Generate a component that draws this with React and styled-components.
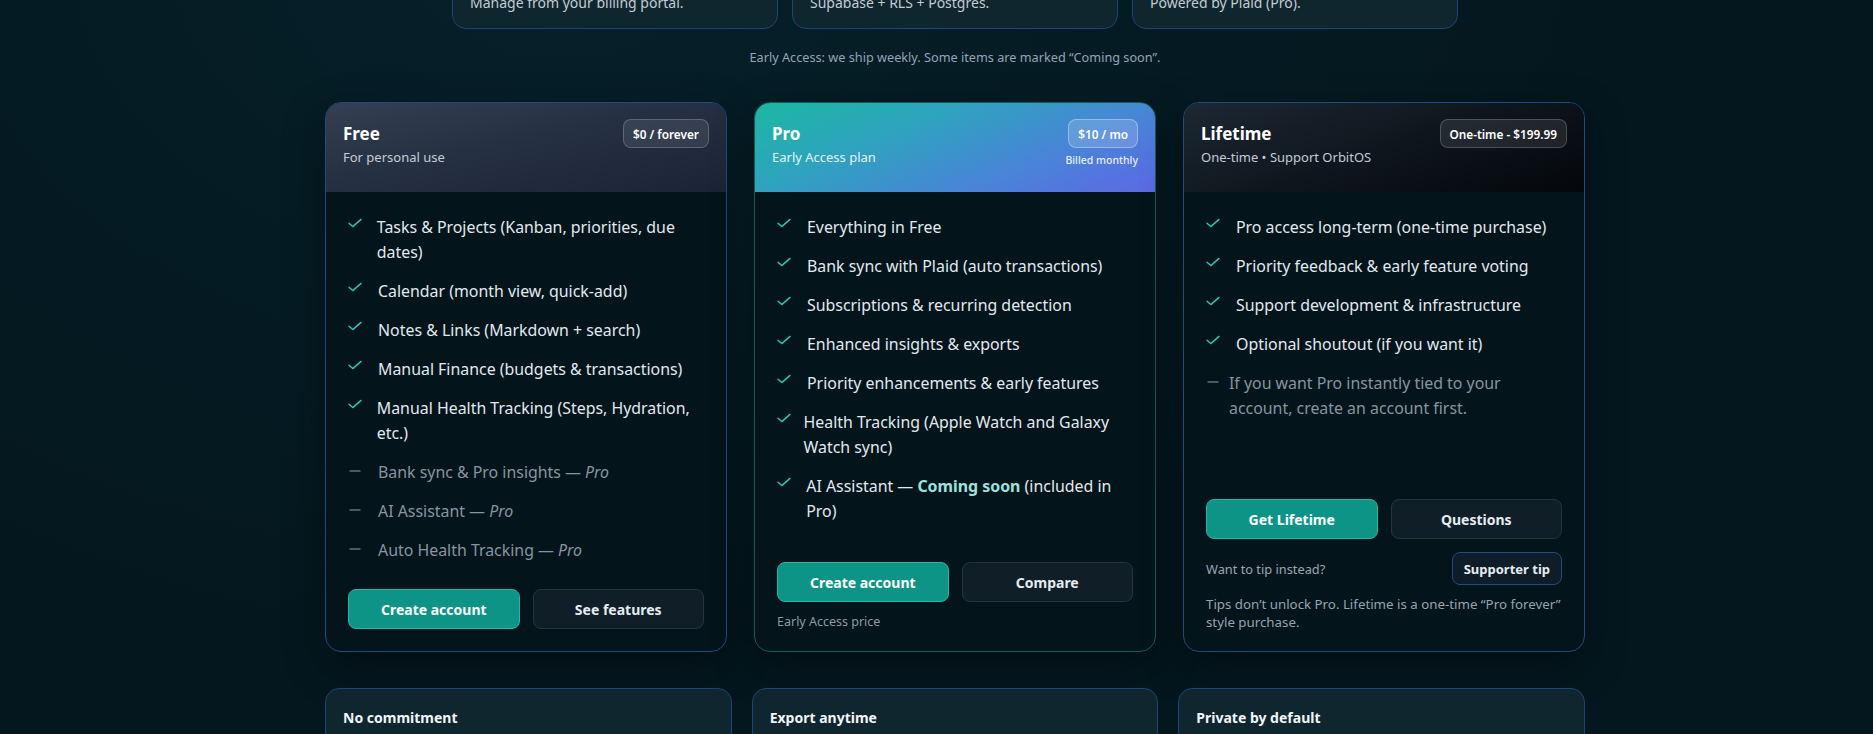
import React from 'react';
import styled, { createGlobalStyle, css } from 'styled-components';

const GlobalStyle = createGlobalStyle`
  html, body {
    margin: 0;
    padding: 0;
    overflow: hidden;
    background: #04171e;
  }
  body {
    font-family: "Noto Sans", "Open Sans", sans-serif;
    color: #e2e8f0;
  }
  * { box-sizing: border-box; }
`;

const Page = styled.main`
  display: flex;
  flex-direction: column;
  align-items: center;
  padding-left: 37px;
  margin-top: -50px;
  min-height: 900px;
  background: radial-gradient(ellipse at 30% 0%, #062029 0%, #04171e 55%);
`;

const InfoRow = styled.section`
  display: grid;
  grid-template-columns: repeat(3, 1fr);
  gap: ${p => p.$gap || 14}px;
  width: ${p => p.$width || 1006}px;
  margin-top: ${p => p.$top || 0}px;
`;

const InfoCard = styled.div`
  background: #10262e;
  border: 1px solid #1d4476;
  border-radius: 14px;
  padding: ${p => p.$pad || '16px 17px 15px'};
`;

const InfoTitle = styled.div`
  font-size: 14px;
  font-weight: 700;
  line-height: 20px;
  color: #f1f5f9;
`;

const InfoText = styled.div`
  margin-top: 6px;
  font-size: 14px;
  line-height: 20px;
  color: #c3ccd5;
`;

const Note = styled.p`
  margin: 20px 0 0;
  font-size: 12.7px;
  line-height: 16px;
  color: #94a3b8;
`;

const PlanGrid = styled.section`
  display: grid;
  grid-template-columns: repeat(3, 402px);
  gap: 27px;
  margin-top: 37px;
`;

const Card = styled.article`
  display: flex;
  flex-direction: column;
  border: 1px solid ${p => (p.$tone === 'pro' ? '#135b57' : '#1c4c80')};
  border-radius: 16px;
  overflow: hidden;
  background: #03141a;
  box-shadow: 0 14px 40px rgba(0, 0, 0, 0.35);
`;

const headerBg = {
  free: 'linear-gradient(168deg, #343f52 0%, #263043 45%, #1b2435 100%)',
  pro: 'linear-gradient(158deg, #1cb8a2 0%, #2fa2bf 35%, #4a83d8 70%, #5d68e6 100%)',
  lifetime: 'linear-gradient(160deg, #1d2833 0%, #0d141b 55%, #04070b 100%)',
};

const Header = styled.header`
  display: flex;
  justify-content: space-between;
  align-items: flex-start;
  height: 89px;
  padding: 16px 17px 0;
  background: ${p => headerBg[p.$tone]};
`;

const TitleBlock = styled.div`
  padding-top: 4px;
`;

const PlanName = styled.h3`
  margin: 0;
  font-size: 17px;
  font-weight: 700;
  line-height: 22px;
  color: #fff;
`;

const PlanSub = styled.div`
  margin-top: 3px;
  font-size: 13px;
  line-height: 18px;
  color: ${p => (p.$tone === 'pro' ? '#e3f4f6' : '#c4ccd6')};
`;

const PriceBlock = styled.div`
  display: flex;
  flex-direction: column;
  align-items: flex-end;
`;

const Badge = styled.span`
  display: inline-flex;
  align-items: center;
  height: 29px;
  padding: 0 9px;
  border-radius: 8px;
  font-size: 11.8px;
  font-weight: 600;
  color: #fff;
  white-space: nowrap;
  background: ${p => (p.$tone === 'pro' ? 'rgba(255,255,255,0.16)' : 'rgba(255,255,255,0.09)')};
  border: 1px solid ${p => (p.$tone === 'pro' ? 'rgba(255,255,255,0.32)' : 'rgba(255,255,255,0.2)')};
`;

const Billed = styled.span`
  margin-top: 4px;
  font-size: 10.5px;
  line-height: 16px;
  font-weight: 500;
  color: rgba(255, 255, 255, 0.9);
`;

const Body = styled.div`
  flex: 1;
  display: flex;
  flex-direction: column;
  padding: 23px 22px 22px;
`;

const List = styled.ul`
  margin: 0;
  padding: 0;
  list-style: none;
  display: flex;
  flex-direction: column;
  gap: 14px;
`;

const Item = styled.li`
  display: flex;
  gap: 10px;
  font-size: 15.9px;
  line-height: 25px;
  color: ${p => (p.$off ? '#8894a0' : '#e2e8f0')};

  em { font-style: italic; }
`;

const IconBox = styled.span`
  flex: 0 1 20px;
  min-width: 0;
  overflow: hidden;
  padding-top: 3px;

  svg { display: block; }
`;

const ItemText = styled.span`
  flex: 0 1 auto;
  min-width: 0;
`;

const Soon = styled.strong`
  font-weight: 700;
  color: #9be2df;
`;

const Footer = styled.div`
  margin-top: auto;
  padding-top: 26px;
`;

const ButtonRow = styled.div`
  display: grid;
  grid-template-columns: 1fr 1fr;
  gap: 13px;
`;

const Button = styled.button`
  height: 40px;
  border-radius: 8px;
  font-family: inherit;
  font-size: 14px;
  font-weight: 700;
  cursor: pointer;
  ${p =>
    p.$primary
      ? css`
          background: #0e9486;
          border: 1px solid #23b9a5;
          color: #fff;
        `
      : css`
          background: #0f1e27;
          border: 1px solid #26343f;
          color: #e6ebf0;
        `}
`;

const Small = styled.p`
  margin: 12px 0 -1px;
  font-size: 12.5px;
  line-height: 16px;
  color: #8e9aa6;
`;

const TipNote = styled.p`
  margin: 10px 0 -2px;
  font-size: 13.3px;
  line-height: 18px;
  color: #97a3ae;
`;

const TipRow = styled.div`
  display: flex;
  justify-content: space-between;
  align-items: center;
  margin-top: 13px;
  font-size: 12.8px;
  color: #9aa5b1;
`;

const TipButton = styled.button`
  height: 33px;
  padding: 0 11px;
  border-radius: 8px;
  background: #0e1d27;
  border: 1px solid #1f4b86;
  color: #e8edf2;
  font-family: inherit;
  font-size: 13px;
  font-weight: 700;
  cursor: pointer;
`;

const Check = () => (
  <svg width="14" height="10" viewBox="0 0 14 10">
    <polyline points="1,5.2 4.8,8.6 13,1.4" fill="none" stroke="#2cc9b4" strokeWidth="1.4" strokeLinecap="round" strokeLinejoin="round" />
  </svg>
);

const Dash = () => (
  <svg width="14" height="10" viewBox="0 0 14 10">
    <line x1="1.5" y1="8" x2="12.5" y2="8" stroke="#66727e" strokeWidth="1.5" />
  </svg>
);

const Feature = ({ off, children }) => (
  <Item $off={off}>
    <IconBox>{off ? <Dash /> : <Check />}</IconBox>
    <ItemText>{children}</ItemText>
  </Item>
);

export default function App() {
  return (
    <>
      <GlobalStyle />
      <Page>
        <InfoRow>
          <InfoCard>
            <InfoTitle>Cancel anytime</InfoTitle>
            <InfoText>Manage from your billing portal.</InfoText>
          </InfoCard>
          <InfoCard>
            <InfoTitle>Secure by design</InfoTitle>
            <InfoText>Supabase + RLS + Postgres.</InfoText>
          </InfoCard>
          <InfoCard>
            <InfoTitle>Bank sync</InfoTitle>
            <InfoText>Powered by Plaid (Pro).</InfoText>
          </InfoCard>
        </InfoRow>

        <Note>Early Access: we ship weekly. Some items are marked “Coming soon”.</Note>

        <PlanGrid>
          <Card $tone="free">
            <Header $tone="free">
              <TitleBlock>
                <PlanName>Free</PlanName>
                <PlanSub>For personal use</PlanSub>
              </TitleBlock>
              <PriceBlock>
                <Badge>$0 / forever</Badge>
              </PriceBlock>
            </Header>
            <Body>
              <List>
                <Feature>Tasks &amp; Projects (Kanban, priorities, due dates)</Feature>
                <Feature>Calendar (month view, quick-add)</Feature>
                <Feature>Notes &amp; Links (Markdown + search)</Feature>
                <Feature>Manual Finance (budgets &amp; transactions)</Feature>
                <Feature>Manual Health Tracking (Steps, Hydration, etc.)</Feature>
                <Feature off>Bank sync &amp; Pro insights — <em>Pro</em></Feature>
                <Feature off>AI Assistant — <em>Pro</em></Feature>
                <Feature off>Auto Health Tracking — <em>Pro</em></Feature>
              </List>
              <Footer>
                <ButtonRow>
                  <Button $primary>Create account</Button>
                  <Button>See features</Button>
                </ButtonRow>
              </Footer>
            </Body>
          </Card>

          <Card $tone="pro">
            <Header $tone="pro">
              <TitleBlock>
                <PlanName>Pro</PlanName>
                <PlanSub $tone="pro">Early Access plan</PlanSub>
              </TitleBlock>
              <PriceBlock>
                <Badge $tone="pro">$10 / mo</Badge>
                <Billed>Billed monthly</Billed>
              </PriceBlock>
            </Header>
            <Body>
              <List>
                <Feature>Everything in Free</Feature>
                <Feature>Bank sync with Plaid (auto transactions)</Feature>
                <Feature>Subscriptions &amp; recurring detection</Feature>
                <Feature>Enhanced insights &amp; exports</Feature>
                <Feature>Priority enhancements &amp; early features</Feature>
                <Feature>Health Tracking (Apple Watch and Galaxy Watch sync)</Feature>
                <Feature>AI Assistant — <Soon>Coming soon</Soon> (included in Pro)</Feature>
              </List>
              <Footer>
                <ButtonRow>
                  <Button $primary>Create account</Button>
                  <Button>Compare</Button>
                </ButtonRow>
                <Small>Early Access price</Small>
              </Footer>
            </Body>
          </Card>

          <Card $tone="lifetime">
            <Header $tone="lifetime">
              <TitleBlock>
                <PlanName>Lifetime</PlanName>
                <PlanSub>One-time • Support OrbitOS</PlanSub>
              </TitleBlock>
              <PriceBlock>
                <Badge>One-time - $199.99</Badge>
              </PriceBlock>
            </Header>
            <Body>
              <List>
                <Feature>Pro access long-term (one-time purchase)</Feature>
                <Feature>Priority feedback &amp; early feature voting</Feature>
                <Feature>Support development &amp; infrastructure</Feature>
                <Feature>Optional shoutout (if you want it)</Feature>
                <Feature off>If you want Pro instantly tied to your account, create an account first.</Feature>
              </List>
              <Footer>
                <ButtonRow>
                  <Button $primary>Get Lifetime</Button>
                  <Button>Questions</Button>
                </ButtonRow>
                <TipRow>
                  <span>Want to tip instead?</span>
                  <TipButton>Supporter tip</TipButton>
                </TipRow>
                <TipNote>Tips don’t unlock Pro. Lifetime is a one-time “Pro forever” style purchase.</TipNote>
              </Footer>
            </Body>
          </Card>
        </PlanGrid>

        <InfoRow $width={1260} $gap={20} $top={36}>
          <InfoCard $pad="19px 17px 18px">
            <InfoTitle>No commitment</InfoTitle>
            <InfoText>Start free and upgrade only when you need Pro.</InfoText>
          </InfoCard>
          <InfoCard $pad="19px 17px 18px">
            <InfoTitle>Export anytime</InfoTitle>
            <InfoText>Your data stays yours, always.</InfoText>
          </InfoCard>
          <InfoCard $pad="19px 17px 18px">
            <InfoTitle>Private by default</InfoTitle>
            <InfoText>No ads, no selling your data.</InfoText>
          </InfoCard>
        </InfoRow>
      </Page>
    </>
  );
}
